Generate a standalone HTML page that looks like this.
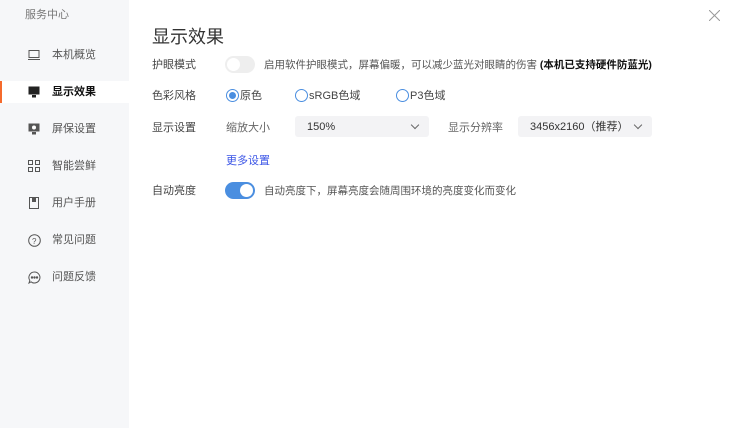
<!DOCTYPE html>
<html><head><meta charset="utf-8"><style>
*{margin:0;padding:0;box-sizing:border-box}
body{width:730px;height:428px;background:#fff;font-family:"Liberation Sans","Noto Sans CJK SC",sans-serif;position:relative;overflow:hidden;color:#333}
.side{position:absolute;left:0;top:0;width:129px;height:428px;background:#f6f7f9}
.t{position:absolute;font-size:11px;white-space:nowrap;line-height:13px}
.nav{position:absolute;left:0;width:129px;height:22px;font-size:11px;color:#555}
.nav span{position:absolute;left:52px;top:5px;line-height:13px}
.nav svg{position:absolute;left:28px;top:5px}
.act{background:#fff;color:#111;font-weight:bold}
.act:before{content:"";position:absolute;left:0;top:0;width:2px;height:22px;background:#f56a2c}
.sw{position:absolute;width:30px;height:17px;border-radius:9px}
.sw i{position:absolute;top:2px;width:13px;height:13px;border-radius:50%;background:#fff}
.radio{position:absolute;width:13px;height:13px;border-radius:50%;border:1px solid #4a8ee0}
.sel{position:absolute;height:21px;background:#f3f3f5;border-radius:3px;font-size:11px;color:#333}
.sel span{position:absolute;left:12px;top:5px;line-height:13px}
.sel b{position:absolute;right:11px;top:6px;width:6px;height:6px;border-right:1px solid #666;border-bottom:1px solid #666;transform:rotate(45deg)}
</style></head><body>
<div class="side">
<div class="t" style="left:25px;top:9px;color:#777">服务中心</div>
<div class="nav" style="top:44px"><svg width="12" height="12"><rect x="1" y="1.5" width="10" height="7" fill="none" stroke="#555"/><line x1="0" y1="10.5" x2="12" y2="10.5" stroke="#555"/></svg><span>本机概览</span></div>
<div class="nav act" style="top:81px"><svg width="12" height="12"><rect x="0.5" y="0.5" width="11" height="8" fill="#222"/><rect x="4" y="9" width="4" height="2.5" fill="#222"/></svg><span>显示效果</span></div>
<div class="nav" style="top:118px"><svg width="12" height="12"><rect x="0.5" y="0.5" width="11" height="8" fill="#555"/><circle cx="6" cy="4.5" r="2" fill="#fff"/><rect x="4" y="9" width="4" height="2.5" fill="#555"/></svg><span>屏保设置</span></div>
<div class="nav" style="top:155px"><svg width="12" height="12" fill="none" stroke="#555"><rect x="0.5" y="0.5" width="4" height="4"/><rect x="7.5" y="0.5" width="4" height="4"/><rect x="0.5" y="7.5" width="4" height="4"/><rect x="7.5" y="7.5" width="4" height="4"/></svg><span>智能尝鲜</span></div>
<div class="nav" style="top:192px"><svg width="12" height="12" fill="none" stroke="#555"><rect x="1.5" y="0.5" width="9" height="11"/><rect x="4.5" y="0.5" width="3" height="4" fill="#555"/></svg><span>用户手册</span></div>
<div class="nav" style="top:229px"><svg width="13" height="13" fill="none" stroke="#555"><circle cx="6.5" cy="6.5" r="5.8"/><text x="4" y="10" font-size="8" fill="#555" stroke="none">?</text></svg><span>常见问题</span></div>
<div class="nav" style="top:266px"><svg width="13" height="13" fill="none" stroke="#555"><path d="M6.5 1A5.5 5.5 0 1 1 3 10.8L1 12 1.8 9.5A5.5 5.5 0 0 1 6.5 1Z"/><circle cx="4" cy="6.5" r=".7" fill="#555"/><circle cx="6.5" cy="6.5" r=".7" fill="#555"/><circle cx="9" cy="6.5" r=".7" fill="#555"/></svg><span>问题反馈</span></div>
</div>
<svg style="position:absolute;left:709px;top:10px" width="11" height="11" stroke="#999"><line x1="0" y1="0" x2="11" y2="11"/><line x1="11" y1="0" x2="0" y2="11"/></svg>
<div class="t" style="left:152px;top:27px;font-size:18px;line-height:20px;color:#333">显示效果</div>
<div class="t" style="left:152px;top:59px;color:#444">护眼模式</div>
<div class="sw" style="left:225px;top:56px;background:#eee"><i style="left:2px"></i></div>
<div class="t" style="left:264px;top:59px;color:#555;font-size:10.5px">启用软件护眼模式，屏幕偏暖，可以减少蓝光对眼睛的伤害 <b style="color:#111">(本机已支持硬件防蓝光)</b></div>
<div class="t" style="left:152px;top:90px;color:#444">色彩风格</div>
<div class="radio" style="left:226px;top:89px"><i style="position:absolute;left:2px;top:2px;width:7px;height:7px;border-radius:50%;background:#4a8ee0"></i></div>
<div class="t" style="left:240px;top:90px;color:#444">原色</div>
<div class="radio" style="left:295px;top:89px"></div>
<div class="t" style="left:309px;top:90px;color:#444">sRGB色域</div>
<div class="radio" style="left:396px;top:89px"></div>
<div class="t" style="left:410px;top:90px;color:#444">P3色域</div>
<div class="t" style="left:152px;top:122px;color:#444">显示设置</div>
<div class="t" style="left:226px;top:122px;color:#666">缩放大小</div>
<div class="sel" style="left:295px;top:116px;width:134px"><span>150%</span><b></b></div>
<div class="t" style="left:448px;top:122px;color:#666">显示分辨率</div>
<div class="sel" style="left:518px;top:116px;width:134px"><span>3456x2160（推荐）</span><b></b></div>
<div class="t" style="left:226px;top:155px;color:#3b55e6">更多设置</div>
<div class="t" style="left:152px;top:185px;color:#444">自动亮度</div>
<div class="sw" style="left:225px;top:182px;background:#4a8ee0"><i style="left:15px"></i></div>
<div class="t" style="left:264px;top:185px;color:#555;font-size:10.5px">自动亮度下，屏幕亮度会随周围环境的亮度变化而变化</div>
</body></html>
